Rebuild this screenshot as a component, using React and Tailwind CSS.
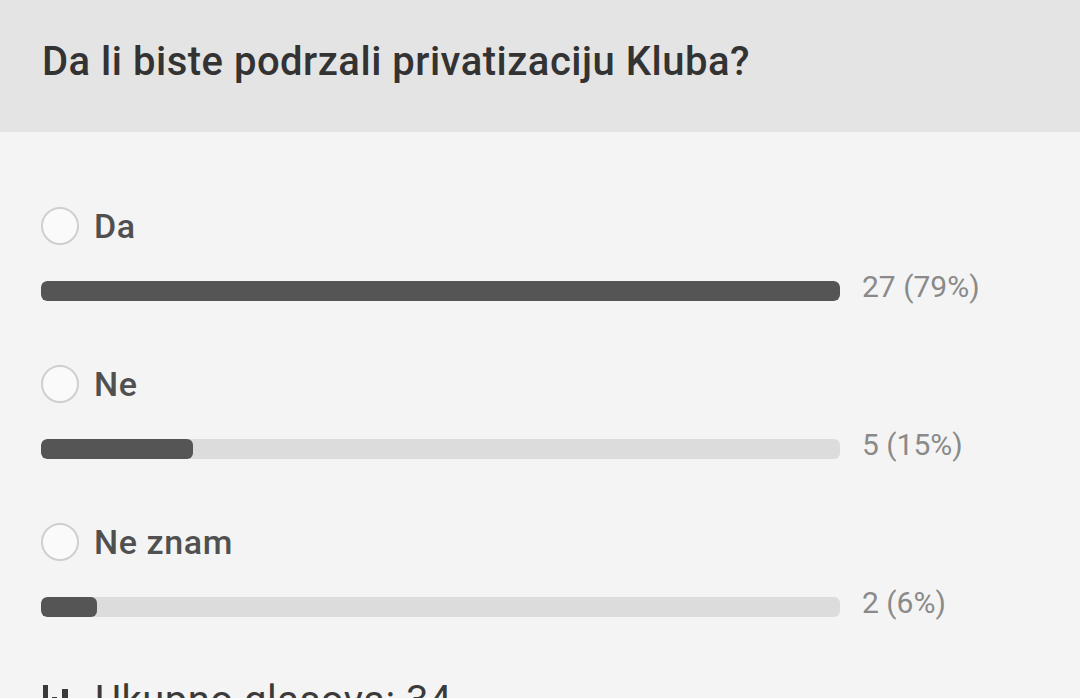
import React from 'react';

const options = [
  { label: 'Da', votes: 27, pct: 79, fill: 799 },
  { label: 'Ne', votes: 5, pct: 15, fill: 152 },
  { label: 'Ne znam', votes: 2, pct: 6, fill: 56 },
];

const PollOption = ({ label, votes, pct, fill }) => (
  <div className="flex flex-col">
    <div className="flex items-center h-[38px]">
      <div className="w-[38px] h-[38px] rounded-full border-2 border-[#cfcfcf] bg-[#fafafa]"></div>
      <span className="ml-[15px] text-[34px] tracking-[0.6px] font-medium text-[#505050] leading-none">{label}</span>
    </div>
    <div className="flex items-center mt-[36px] h-[20px]">
      <div className="w-[799px] h-[20px] rounded-[6px] bg-[#dcdcdc] overflow-hidden">
        <div className="h-full rounded-[6px] bg-[#555555]" style={{ width: `${fill}px` }}></div>
      </div>
      <span className="ml-[22px] text-[30px] text-[#8a8a8a] leading-none -mt-[8px]">
        {votes} ({pct}%)
      </span>
    </div>
  </div>
);

export default function App() {
  return (
    <div className="w-[1080px] h-[698px] overflow-hidden bg-[#f4f4f4]" style={{ fontFamily: 'Roboto, "Noto Sans", sans-serif' }}>
      <div className="h-[132px] bg-[#e4e4e4] flex items-center px-[42px] pb-[8px]">
        <h1 className="text-[40px] tracking-[0.5px] font-medium text-[#333333] leading-none">Da li biste podrzali privatizaciju Kluba?</h1>
      </div>
      <div className="px-[41px] pt-[75px] flex flex-col gap-[64px]">
        {options.map((o) => (
          <PollOption key={o.label} {...o} />
        ))}
      </div>
      <div className="flex items-start px-[43px] mt-[64px]">
        <svg className="w-[30px] h-[34px] mt-[4px]" viewBox="0 0 30 34" fill="#3a3a3a">
          <rect x="0" y="0" width="5" height="34" />
          <rect x="19" y="4" width="6" height="30" />
          <rect x="9" y="12" width="5" height="22" />
        </svg>
        <span className="ml-[22px] text-[40px] tracking-[0.5px] text-[#3a3a3a] leading-none">Ukupno glasova: 34</span>
      </div>
    </div>
  );
}
